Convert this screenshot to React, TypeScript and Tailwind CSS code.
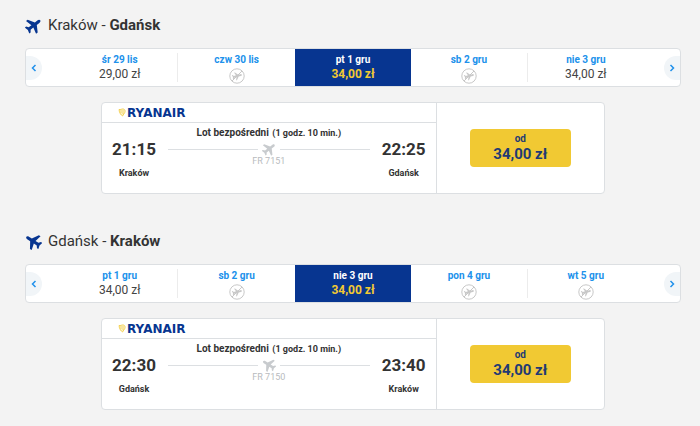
import clsx from "clsx";

type Day = { label: string; price?: string; active?: boolean };

type Trip = {
  from: string;
  to: string;
  back?: boolean;
  days: Day[];
  departure: string;
  arrival: string;
  flight: string;
};

const trips: Trip[] = [
  {
    from: "Kraków",
    to: "Gdańsk",
    days: [
      { label: "śr 29 lis", price: "29,00 zł" },
      { label: "czw 30 lis" },
      { label: "pt 1 gru", price: "34,00 zł", active: true },
      { label: "sb 2 gru" },
      { label: "nie 3 gru", price: "34,00 zł" },
    ],
    departure: "21:15",
    arrival: "22:25",
    flight: "FR 7151",
  },
  {
    from: "Gdańsk",
    to: "Kraków",
    back: true,
    days: [
      { label: "pt 1 gru", price: "34,00 zł" },
      { label: "sb 2 gru" },
      { label: "nie 3 gru", price: "34,00 zł", active: true },
      { label: "pon 4 gru" },
      { label: "wt 5 gru" },
    ],
    departure: "22:30",
    arrival: "23:40",
    flight: "FR 7150",
  },
];

const Plane = ({ back, className }: { back?: boolean; className?: string }) => (
  <svg viewBox="0 0 24 24" fill="currentColor" className={className}>
    <g transform={back ? "rotate(-57 12 12)" : "rotate(52 12 12)"}>
      <path d="M12 0c-1.300 0-2.200 1.200-2.200 2.800v5L.5 13.500v2.900l9.300-2.400v4.900L6.800 21.200v2.400l5.200-1.500 5.200 1.500v-2.400l-3-2.300v-4.900l9.300 2.400v-2.900L14.200 7.800V2.800C14.200 1.200 13.300 0 12 0z" />
    </g>
  </svg>
);

const NoFlight = () => (
  <svg
    viewBox="0 0 16 16"
    fill="none"
    className="mt-px size-4 shrink-0 text-[#c8c8c8]"
  >
    <circle cx="8" cy="8" r="7.200" stroke="currentColor" />
    <path d="M3 13L13 3" stroke="currentColor" />
    <g transform="rotate(-15 8 8)">
      <path
        d="M13 8c0-.6-.5-.9-1.200-.9H9.500L7 4H6l1.200 3.100H5L4 6h-.8l.6 2-.6 2H4l1-1.100h2.200L6 12h1l2.500-3.100h2.300c.7 0 1.200-.3 1.200-.9z"
        fill="currentColor"
      />
    </g>
  </svg>
);

const Logo = () => (
  <span className="flex items-center gap-px">
    <svg viewBox="0 0 8 9" fill="none" className="h-[9px] w-2 text-[#f1c933]">
      <path
        d="M1 1.500C2.500 2 4 .5 5.500 1 7 1.500 7.500 3 6.800 4.500L4.500 8C3 7 1.300 5 1 1.500z"
        fill="currentColor"
        fillOpacity=".25"
        stroke="currentColor"
        strokeWidth=".8"
      />
      <path d="M3 2v3M5 2v4" stroke="currentColor" strokeWidth=".6" />
    </svg>
    <span className="font-['DejaVu_Sans'] text-xs leading-4 font-bold text-[#073590]">
      RYANAIR
    </span>
  </span>
);

const Arrow = ({ next }: { next?: boolean }) => (
  <button
    aria-label={next ? "Następne dni" : "Poprzednie dni"}
    className={clsx(
      "flex h-6 w-4 items-center justify-center bg-[#f1f5f8] text-[#2091eb]",
      next ? "rounded-l-full" : "rounded-r-full"
    )}
  >
    <svg viewBox="0 0 6 8" fill="none" className="h-2 w-1.5">
      <path
        d={next ? "M1.500 1L4.500 4l-3 3" : "M4.500 1L1.500 4l3 3"}
        stroke="currentColor"
        strokeWidth="1.500"
      />
    </svg>
  </button>
);

const DayBar = ({ days }: { days: Day[] }) => (
  <div className="mt-[13px] flex h-[39px] items-center justify-between rounded border border-[#dcdfe2] bg-white">
    <Arrow />
    <div className="mx-5 flex flex-1 self-stretch">
      {days.map((day, i) => (
        <button
          key={day.label}
          className={clsx(
            "flex flex-1 items-stretch py-1",
            day.active && "bg-[#073590]"
          )}
        >
          <span
            className={clsx(
              "flex flex-1 flex-col items-center",
              (i === 0 || i === 3) && "border-r border-[#ececec]"
            )}
          >
            <span
              className={clsx(
                "text-[10px] leading-[14px] font-bold",
                day.active ? "text-white" : "text-[#2091eb]"
              )}
            >
              {day.label}
            </span>
            {day.price ? (
              <span
                className={clsx(
                  "text-xs leading-[14px]",
                  day.active ? "font-bold text-[#f1c933]" : "text-[#444]"
                )}
              >
                {day.price}
              </span>
            ) : (
              <NoFlight />
            )}
          </span>
        </button>
      ))}
    </div>
    <Arrow next />
  </div>
);

const Stop = ({ time, city }: { time: string; city: string }) => (
  <div className="flex w-11 flex-col items-center gap-2">
    <span className="text-[17px] leading-5 font-bold">{time}</span>
    <span className="text-[9px] leading-3 font-bold">{city}</span>
  </div>
);

const FlightCard = ({ trip }: { trip: Trip }) => (
  <div className="mx-auto mt-[15px] flex h-[92px] w-full max-w-[504px] rounded border border-[#dcdfe2] bg-white">
    <div className="flex w-2/3 flex-col border-r border-[#dcdfe2]">
      <div className="flex h-5 items-center border-b border-[#dcdfe2] px-4">
        <Logo />
      </div>
      <div className="flex flex-1 gap-3 px-2.5">
        <div className="pt-4">
          <Stop time={trip.departure} city={trip.from} />
        </div>
        <div className="flex flex-1 flex-col items-center pt-1">
          <p className="text-[10px] leading-3 font-bold whitespace-nowrap">
            Lot bezpośredni{" "}
            <span className="ml-px text-[9px]">(1 godz. 10 min.)</span>
          </p>
          <div className="mt-[3px] flex w-full items-center gap-1 text-[#c8cbce]">
            <span className="h-px flex-1 bg-[#dcdfe2]" />
            <Plane back={trip.back} className="size-3.5" />
            <span className="h-px flex-1 bg-[#dcdfe2]" />
          </div>
          <span className="text-[9px] leading-[10px] text-[#b8bbbe]">
            {trip.flight}
          </span>
        </div>
        <div className="pt-4">
          <Stop time={trip.arrival} city={trip.to} />
        </div>
      </div>
    </div>
    <div className="flex flex-1 items-center justify-center">
      <button className="flex h-[38px] w-[101px] flex-col items-center justify-center rounded bg-[#f1c933] font-bold text-[#1f3a74]">
        <span className="text-[10px] leading-3">od</span>
        <span className="text-[15px] leading-[18px]">34,00 zł</span>
      </button>
    </div>
  </div>
);

const App = () => {
  return (
    <main className="flex min-h-screen flex-col gap-[37px] bg-[#f3f3f3] pt-[15px] pr-[19px] pb-4 pl-[25px] font-[Roboto,sans-serif] text-[#333]">
      {trips.map((trip) => (
        <section key={trip.flight}>
          <h2 className="flex items-center gap-1.5 text-[15px] leading-5">
            <Plane back={trip.back} className="size-[17px] text-[#073590]" />
            <span>
              {trip.from} - <b>{trip.to}</b>
            </span>
          </h2>
          <DayBar days={trip.days} />
          <FlightCard trip={trip} />
        </section>
      ))}
    </main>
  );
};

export default App;
